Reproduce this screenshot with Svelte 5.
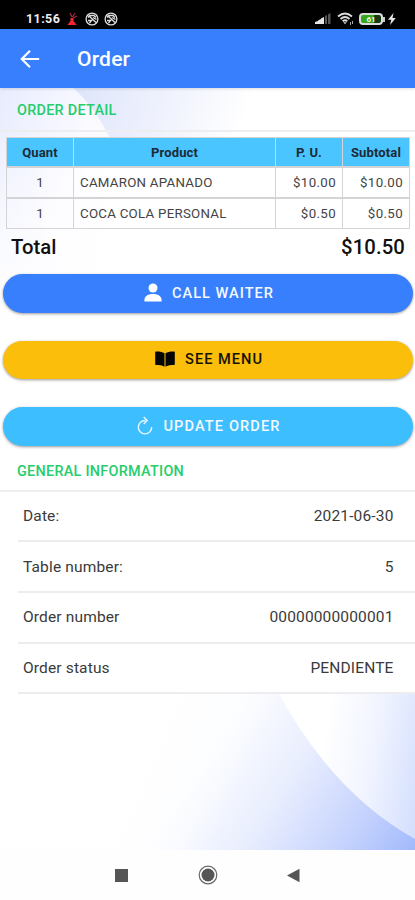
<script>
  const items = [
    { qty: 1, name: 'CAMARON APANADO', price: '$10.00', subtotal: '$10.00' },
    { qty: 1, name: 'COCA COLA PERSONAL', price: '$0.50', subtotal: '$0.50' }
  ];
  const info = [
    ['Date:', '2021-06-30'],
    ['Table number:', '5'],
    ['Order number', '00000000000001'],
    ['Order status', 'PENDIENTE']
  ];
</script>

<div class="phone">
  <div class="status">
    <span class="time">11:56</span>
    <svg class="flask" width="11" height="14" viewBox="0 0 11 14">
      <path d="M3.5 6h3v3l3.3 4H.3l3.2-4z" fill="#f02630" />
      <path d="M5 5 3 1M5.5 5 8 1M6 6l4-2" stroke="#a42a40" stroke-width="1.2" fill="none" />
    </svg>
    {#each [0, 1] as n (n)}
      <svg class="ball" width="14" height="14" viewBox="0 0 14 14" fill="none" stroke="#ddd">
        <circle cx="7" cy="7" r="5.9" stroke-width="1.3" />
        <path d="M3 5.500 5 3.500h4L11 5.500M3.500 3.500l7.500 7M3 8.500h3.500l-2 2.500M8 5.500l3.500 2" stroke-width="1.4" />
      </svg>
    {/each}
    <div class="right">
      <svg width="16" height="13" viewBox="0 0 16 13">
        <path d="M0 12v-2l3-1v3zM3 12V8.500L6 7v5zM6 12V6.500L9 5v7z" fill="#e5e5e5" />
        <path d="M10 12V4l2-1v9zM13 12V2.500L15.500 1v11z" fill="#555" />
      </svg>
      <svg class="wifi" width="17" height="14" viewBox="0 0 17 14" fill="none" stroke="#ddd" stroke-width="1.8">
        <path d="M1 4.500Q8 -1.500 15 4.500M3.500 7Q8 3 12.500 7M5.700 9.300Q8 7.300 10.300 9.300" />
        <path d="m6.300 10.300 1.700 2 1.700-2z" fill="#ddd" stroke="none" />
        <path d="M13.500 10v3M15.500 9v3" stroke-width="1" stroke="#aaa" />
      </svg>
      <div class="battery"><span>61</span></div>
      <svg class="bolt" width="8" height="12" viewBox="0 0 8 12"><path d="M5.500 0 0 6.700h3.300L2 12l5.800-7H4.500z" fill="#e8e8e8" /></svg>
    </div>
  </div>

  <header>
    <svg width="20" height="20" viewBox="0 0 20 20" fill="none" stroke="#fff" stroke-width="2.2">
      <path d="M10 1.800 1.800 10l8.200 8.200M2 10h17.200" />
    </svg>
    <h1>Order</h1>
  </header>

  <main>
    <svg class="backdrop" width="415" height="762" viewBox="0 0 415 762" preserveAspectRatio="none">
      <defs>
        <linearGradient id="lowWave" gradientUnits="userSpaceOnUse" x1="220" y1="650" x2="410" y2="778">
          <stop offset="0" stop-color="#fcfdff" />
          <stop offset=".35" stop-color="#e9eefe" />
          <stop offset=".7" stop-color="#c6d3fd" />
          <stop offset="1" stop-color="#9fb8fc" />
        </linearGradient>
        <linearGradient id="lowFade" gradientUnits="userSpaceOnUse" x1="120" y1="690" x2="225" y2="735">
          <stop offset="0" stop-color="#fff" />
          <stop offset="1" stop-color="#fff" stop-opacity="0" />
        </linearGradient>
        <linearGradient id="lowLight" gradientUnits="userSpaceOnUse" x1="320" y1="670" x2="440" y2="690">
          <stop offset="0" stop-color="#fff" />
          <stop offset=".4" stop-color="#f2f5ff" />
          <stop offset="1" stop-color="#ccd9fd" />
        </linearGradient>
        <linearGradient id="topLeft" gradientUnits="userSpaceOnUse" x1="0" y1="0" x2="90" y2="30">
          <stop offset="0" stop-color="#e8ecfe" />
          <stop offset="1" stop-color="#fafaff" />
        </linearGradient>
        <linearGradient id="leftFade" x1="0" y1="0" x2="0" y2="1">
          <stop offset=".15" stop-color="#fff" stop-opacity="0" />
          <stop offset="1" stop-color="#fff" />
        </linearGradient>
        <linearGradient id="rightFade" gradientUnits="userSpaceOnUse" x1="30" y1="0" x2="115" y2="0">
          <stop offset="0" stop-color="#fff" stop-opacity="0" />
          <stop offset="1" stop-color="#fff" />
        </linearGradient>
        <linearGradient id="topWave" gradientUnits="userSpaceOnUse" x1="80" y1="0" x2="240" y2="50">
          <stop offset="0" stop-color="#dfe5fb" />
          <stop offset="1" stop-color="#fff" />
        </linearGradient>
      </defs>
      <rect width="415" height="762" fill="#fff" />
      <rect width="260" height="240" fill="url(#topLeft)" />
      <rect width="260" height="240" fill="url(#leftFade)" />
      <rect y="50" width="260" height="190" fill="url(#rightFade)" />
      <path d="M73 0Q94 18 110 50H415V0z" fill="url(#topWave)" />
      <rect y="560" width="415" height="202" fill="url(#lowWave)" />
      <rect y="560" width="415" height="202" fill="url(#lowFade)" />
      <path d="M273 595Q330 704 415 751V595z" fill="url(#lowLight)" />
    </svg>

    <h2 class="first">ORDER DETAIL</h2>

    <div class="table">
      <div class="row head"><div>Quant</div><div>Product</div><div>P. U.</div><div>Subtotal</div></div>
      {#each items as item (item.name)}
        <div class="row">
          <div class="qty">{item.qty}</div>
          <div class="name">{item.name}</div>
          <div class="money">{item.price}</div>
          <div class="money">{item.subtotal}</div>
        </div>
      {/each}
    </div>

    <div class="total"><span>Total</span><span>$10.50</span></div>

    <div class="actions">
      <button class="call">
        <svg width="18" height="19" viewBox="0 0 18 19" fill="#fff"><circle cx="9" cy="5" r="4.500" /><path d="M.4 18.500v-1.600C.4 12.700 5 11 9 11s8.600 1.700 8.600 5.900v1.600z" /></svg>
        <span>CALL WAITER</span>
      </button>
      <button class="menu">
        <svg width="20" height="16" viewBox="0 0 20 16" fill="#050505"><path d="M9.500 2.300C7.500.7 4 .4 1 .5Q.2.600.2 1.300v11.900q0 .8.800.8c3 0 6 .2 8.500 1.800zM10.500 2.300C12.500.7 16 .4 19 .5q.8.100.8.800v11.900q0 .8-.8.800c-3 0-6 .2-8.500 1.800z" /></svg>
        <span>SEE MENU</span>
      </button>
      <button class="update">
        <svg width="16" height="19" viewBox="0 0 16 19" fill="none" stroke="#e8f7ff" stroke-width="1.4"><path d="M8.500 4.500A6.700 6.700 0 1 0 14.700 11M6.700 1 10.200 4.500 6.700 8" /></svg>
        <span>UPDATE ORDER</span>
      </button>
    </div>

    <section>
      <h2>GENERAL INFORMATION</h2>
      {#each info as [label, value] (label)}
        <div class="item"><span>{label}</span><span>{value}</span></div>
      {/each}
    </section>
  </main>

  <nav>
    <i class="square"></i>
    <svg class="home" width="20" height="20" viewBox="0 0 20 20"><circle cx="10" cy="10" r="8.800" fill="none" stroke="#666" stroke-width="1.2" /><circle cx="10" cy="10" r="6.500" fill="#555" /></svg>
    <svg class="back" width="13" height="15" viewBox="0 0 13 15"><path d="M0 7.500 12.500.7v13.600z" fill="#555" /></svg>
  </nav>
</div>

<style>
  .phone {
    width: 415px;
    height: 900px;
    overflow: hidden;
    display: flex;
    flex-direction: column;
    background: #fff;
    color: #333;
    font-family: Roboto, 'Liberation Sans', sans-serif;
  }
  .status {
    height: 29px;
    flex: none;
    box-sizing: border-box;
    padding: 8px 19px 0 26px;
    display: flex;
    align-items: center;
    background: #000;
    color: #eee;
  }
  .time { width: 35px; font: 700 12.5px/18px Roboto, sans-serif; letter-spacing: .4px; white-space: nowrap; }
  .flask { margin-left: 6px; }
  .ball { margin-left: 7px; }
  .ball + .ball { margin-left: 5px; }
  .right { margin-left: auto; display: flex; align-items: center; }
  .wifi { margin-left: 6px; }
  .battery {
    position: relative;
    box-sizing: border-box;
    width: 24px;
    height: 12px;
    margin: 0 5px 0 5px;
    border: 2px solid #ddd;
    border-radius: 4px;
    background: linear-gradient(90deg, #39a51d 64%, #173b0e 64%);
    font: 700 8px/9px Roboto, sans-serif;
    text-align: center;
    color: #f3fff0;
  }
  .battery::after { content: ''; position: absolute; right: -4px; top: 2px; width: 2px; height: 5px; background: #ccc; }
  header {
    height: 59px;
    flex: none;
    box-sizing: border-box;
    display: flex;
    align-items: center;
    padding-left: 20px;
    background: #387ffd;
    color: #fff;
    position: relative;
    z-index: 1;
    box-shadow: 0 1px 3px #0002;
  }
  h1 { margin: 0 0 0 37px; font-size: 21px; font-weight: 500; line-height: 24px; letter-spacing: .2px; }
  main { position: relative; height: 762px; flex: none; isolation: isolate; }
  .backdrop { position: absolute; inset: 0; z-index: -1; }
  h2 {
    box-sizing: border-box;
    margin: 0;
    padding-left: 17px;
    border-bottom: 2px solid #eeeef1;
    color: #25cd6b;
    font-size: 14.4px;
    font-weight: 500;
    letter-spacing: .28px;
  }
  h2.first { height: 44px; line-height: 45px; }
  .table { margin: 5px 5px 0 6px; }
  .row {
    box-sizing: border-box;
    height: 31px;
    display: grid;
    grid-template-columns: 66px 202px 67px 1fr;
    border: 1px solid #d4d4d6;
    font-size: 13.3px;
    line-height: 30px;
    color: #444;
  }
  .row.head { height: 30px; line-height: 29px; background: #4bc5ff; color: #1b2b36; font-weight: 700; font-size: 13px; text-align: center; letter-spacing: .15px; }
  .row div + div { border-left: 1px solid #d4d4d6; }
  .qty { text-align: center; }
  .name { padding-left: 6px; letter-spacing: .25px; white-space: nowrap; }
  .money { text-align: right; padding-right: 6px; letter-spacing: .35px; }
  .total {
    display: flex;
    justify-content: space-between;
    height: 36px;
    padding: 0 10px 0 11px;
    color: #101010;
    font-size: 20.3px;
    font-weight: 500;
    line-height: 36px;
  }
  .total span:last-child { letter-spacing: .12px; }
  .actions { display: flex; flex-direction: column; gap: 28px; padding: 9px 2px 0 3px; }
  button {
    display: flex;
    align-items: center;
    justify-content: center;
    height: 38.5px;
    padding: 0 0 1px 2px;
    border: 0;
    border-radius: 20px;
    box-shadow: 0 1px 3px #0006;
    font: 500 14.6px/20px Roboto, sans-serif;
    letter-spacing: 1px;
    color: #f4f9ff;
  }
  button svg { margin-right: 10px; }
  .call { background: #387ffd; }
  .menu { background: #fabe0b; color: #171200; }
  .update { background: #3dbeff; }
  .update span { letter-spacing: 1.1px; }
  section { margin-top: 8px; background: #fff; }
  section h2 { height: 38px; line-height: 35px; }
  .item {
    box-sizing: border-box;
    height: 50.7px;
    display: flex;
    justify-content: space-between;
    align-items: center;
    margin-left: 18px;
    padding: 0 21.5px 0 5px;
    border-bottom: 2px solid #ededef;
    font-size: 15.5px;
    letter-spacing: .15px;
    color: #3a3a3a;
  }
  nav { flex: 1; display: flex; align-items: center; padding-left: 115px; background: #fefefe; }
  .square { width: 13px; height: 13px; background: #555; }
  .home { margin-left: 70px; }
  .back { margin-left: 69px; }
</style>
